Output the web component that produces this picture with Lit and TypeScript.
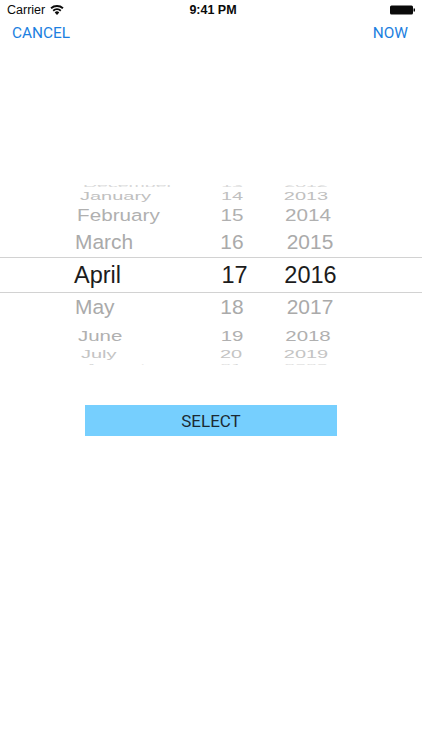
import { LitElement, html, css } from "lit";
import { customElement } from "lit/decorators.js";

interface Row { m: string; d: string; y: string; h: number; sy: number; sx: number; c: string; mx: number; dx: number; yx: number; mt?: number; }

const rows: Row[] = [
  { m: "December", d: "13", y: "2012", h: 11, mt: -6, sy: 0.22, sx: 0.83, c: "#d8d8d8", mx: 83, dx: 232, yx: 306 },
  { m: "January", d: "14", y: "2013", h: 13, sy: 0.48, sx: 0.85, c: "#c0c0c0", mx: 80, dx: 231.5, yx: 305.5 },
  { m: "February", d: "15", y: "2014", h: 25, sy: 0.69, sx: 0.88, c: "#b0b0b0", mx: 77, dx: 232, yx: 308 },
  { m: "March", d: "16", y: "2015", h: 29, sy: 0.89, sx: 0.89, c: "#aaaaaa", mx: 75, dx: 232, yx: 310 },
  { m: "April", d: "17", y: "2016", h: 36, sy: 1, sx: 1, c: "#1c1c1c", mx: 74, dx: 234.5, yx: 310.5 },
  { m: "May", d: "18", y: "2017", h: 29, sy: 0.89, sx: 0.89, c: "#aaaaaa", mx: 75, dx: 232, yx: 310 },
  { m: "June", d: "19", y: "2018", h: 27, sy: 0.63, sx: 0.87, c: "#b0b0b0", mx: 78, dx: 232, yx: 308 },
  { m: "July", d: "20", y: "2019", h: 11, sy: 0.44, sx: 0.85, c: "#c4c4c4", mx: 81, dx: 231, yx: 305.5 },
  { m: "August", d: "21", y: "2020", h: 10, sy: 0.22, sx: 0.83, c: "#d8d8d8", mx: 85, dx: 231, yx: 305.5 },
];

@customElement("app-root")
export class AppRoot extends LitElement {
  static styles = css`
    :host { display: block; width: 422px; height: 750px; background: #fff; overflow: hidden; font-family: "Liberation Sans", Arial, sans-serif; }
    .status { height: 20px; display: grid; grid-template-columns: 1fr auto 1fr; align-items: center; padding: 0 7px; color: #0a0a0a; font-size: 12.5px; }
    .left { display: flex; align-items: center; gap: 5px; }
    .time { font-weight: 700; font-size: 12.5px; margin-left: 4px; }
    .right { display: flex; justify-content: flex-end; }
    .nav { display: flex; justify-content: space-between; padding: 0 14px 0 12px; height: 26px; align-items: center; color: #1c7fe0; font-family: Roboto, sans-serif; font-size: 15.4px; }
    .picker { margin-top: 139px; height: 180px; overflow: hidden; position: relative; }
    .row { position: relative; display: block; box-sizing: border-box; }
    .sel { border-top: 1px solid #d2d2d2; border-bottom: 1px solid #d2d2d2; }
    .cell { position: absolute; top: calc(50% + 0.5px); font-size: 23.5px; line-height: 1; white-space: nowrap; }
    .wrap { display: flex; justify-content: center; margin-top: 40px; }
    button { width: 252px; height: 31px; border: 0; padding: 0; background: #76cffe; color: #1c2a33; font-family: Roboto, sans-serif; font-size: 17px; }
  `;

  cell(text: string, x: number, r: Row, center: boolean) {
    const origin = center ? "center" : "left";
    const tx = center ? "-50%" : "0";
    return html`<span class="cell" style="left:${x}px;color:${r.c};transform-origin:${origin} center;transform:translate(${tx},-50%) scale(${r.sx},${r.sy})">${text}</span>`;
  }

  render() {
    return html`
      <div class="status">
        <div class="left">
          <span>Carrier</span>
          <svg width="14" height="10" viewBox="0 0 14 10"><path fill="#0a0a0a" d="M7 10 4.7 7.4a3.4 3.4 0 0 1 4.6 0Zm-3.2-3.6L2.6 5a6.6 6.6 0 0 1 8.8 0l-1.2 1.4a4.8 4.8 0 0 0-6.4 0ZM1.7 4 .4 2.6a10 10 0 0 1 13.2 0L12.3 4a8 8 0 0 0-10.6 0Z"/></svg>
        </div>
        <div class="time">9:41 PM</div>
        <div class="right">
          <svg width="25" height="10" viewBox="0 0 25 10"><rect x="0" y="0.5" width="23" height="9" rx="1.5" fill="#0a0a0a"/><rect x="23.5" y="3.5" width="1.5" height="3" fill="#0a0a0a"/></svg>
        </div>
      </div>
      <div class="nav"><span>CANCEL</span><span>NOW</span></div>
      <div class="picker">
        ${rows.map((r) => html`
          <div class="row ${r.m === "April" ? "sel" : ""}" style="height:${r.h}px;margin-top:${r.mt ?? 0}px">
            ${this.cell(r.m, r.mx, r, false)}
            ${this.cell(r.d, r.dx, r, true)}
            ${this.cell(r.y, r.yx, r, true)}
          </div>`)}
      </div>
      <div class="wrap"><button>SELECT</button></div>
    `;
  }
}
